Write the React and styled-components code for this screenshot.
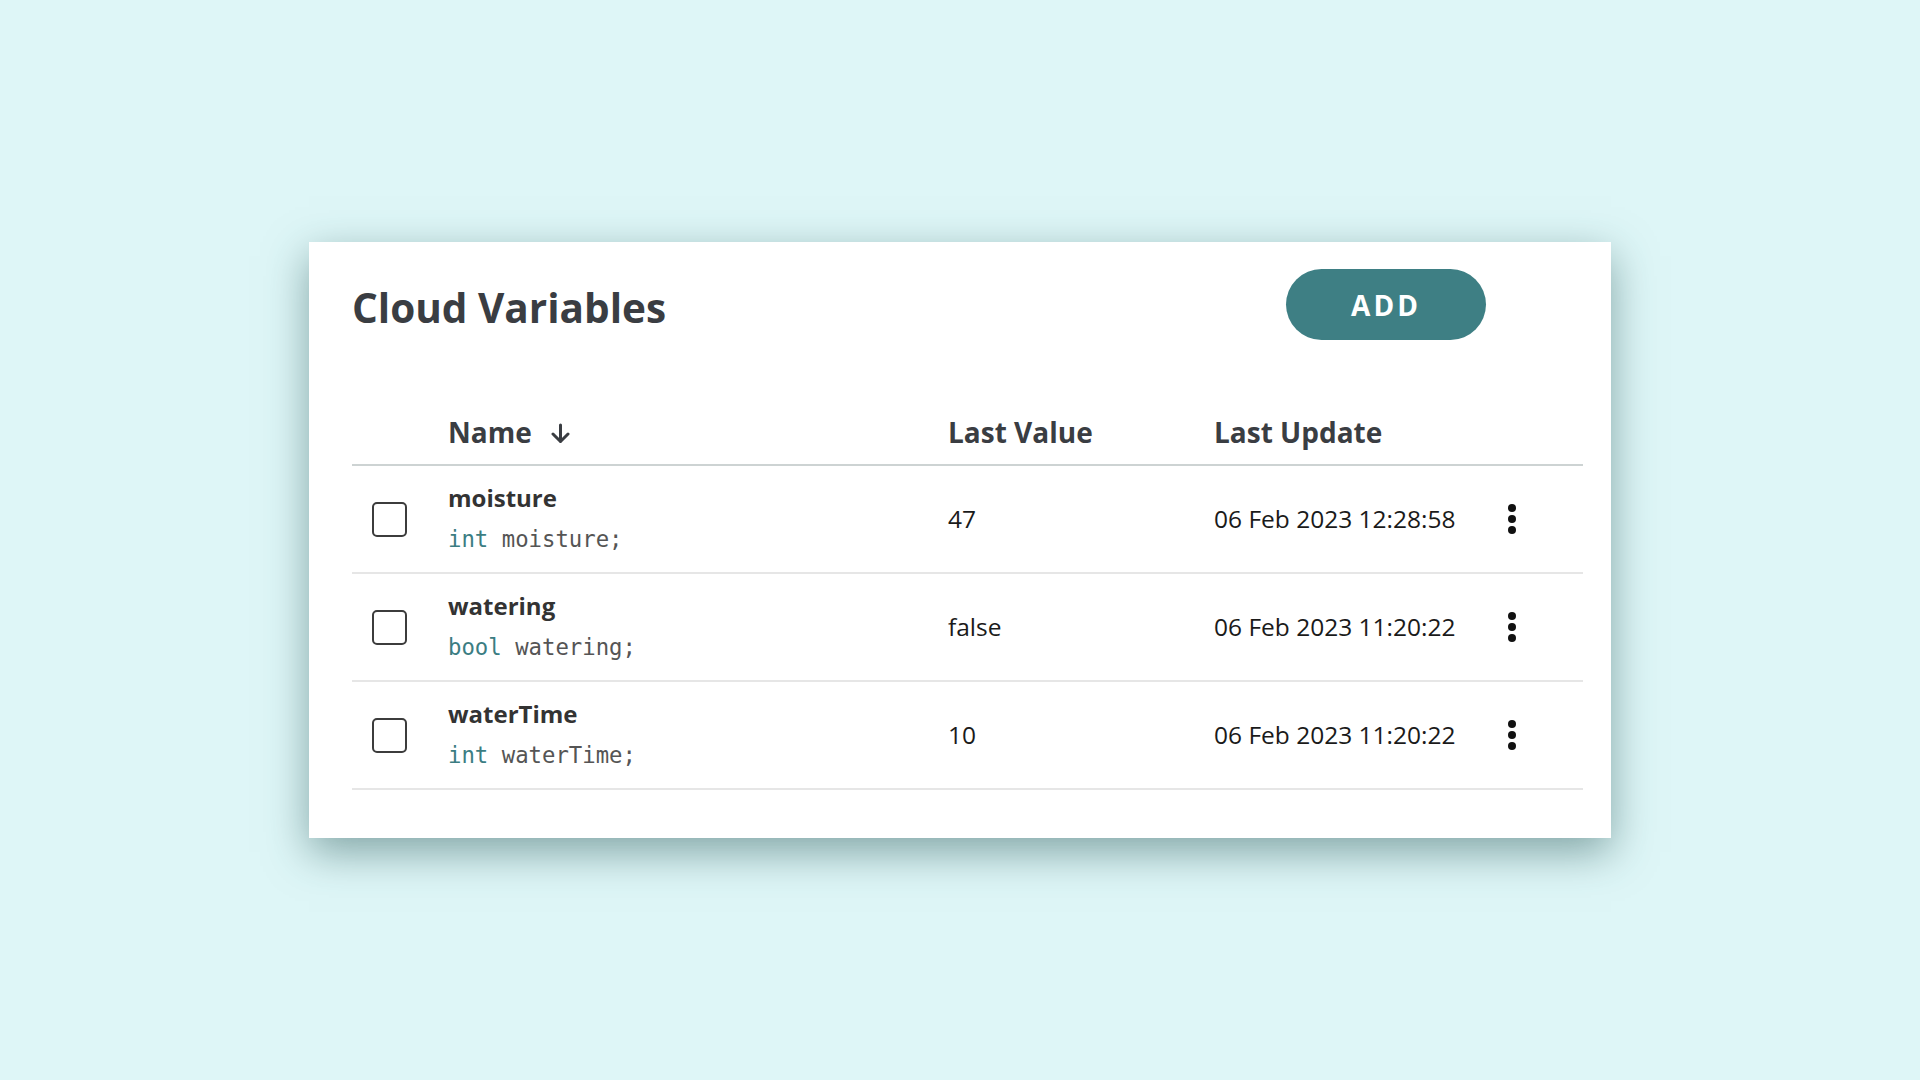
import React from 'react'
import styled, { createGlobalStyle } from 'styled-components'

const GlobalStyle = createGlobalStyle`
  html, body {
    margin: 0;
    padding: 0;
    background: #def6f7;
  }
  body {
    font-family: "Open Sans", "Liberation Sans", sans-serif;
  }
`

const variables = [
  { name: 'moisture', type: 'int', decl: 'moisture;', value: '47', updated: '06 Feb 2023 12:28:58' },
  { name: 'watering', type: 'bool', decl: 'watering;', value: 'false', updated: '06 Feb 2023 11:20:22' },
  { name: 'waterTime', type: 'int', decl: 'waterTime;', value: '10', updated: '06 Feb 2023 11:20:22' },
]

const Page = styled.div`
  min-height: 100vh;
  display: flex;
  align-items: center;
  justify-content: center;
`

const Card = styled.section`
  width: 1302px;
  box-sizing: border-box;
  background: #fff;
  padding: 27px 28px 48px 43px;
  box-shadow: 0 14px 40px rgba(40, 85, 85, 0.5);
`

const TitleRow = styled.div`
  display: flex;
  align-items: center;
  justify-content: space-between;
  height: 71px;
`

const Title = styled.h1`
  margin: 0;
  padding-top: 6px;
  font-size: 40.5px;
  line-height: 54px;
  font-weight: 700;
  color: #3a3d42;
`

const AddButton = styled.button`
  width: 200px;
  height: 71px;
  margin-right: 97px;
  border: none;
  border-radius: 36px;
  background: #3e7f84;
  color: #fff;
  font-family: "Open Sans", sans-serif;
  font-size: 28px;
  font-weight: 700;
  letter-spacing: 3px;
  cursor: pointer;
`

const Table = styled.div`
  margin-top: 74px;
`

const Grid = styled.div`
  display: grid;
  grid-template-columns: 96px 500px 266px 270px 56px 1fr;
  align-items: center;
`

const HeaderRow = styled(Grid)`
  padding-bottom: 13px;
  border-bottom: 2px solid #cdd3d3;
`

const HeadCell = styled.div`
  display: flex;
  align-items: center;
  gap: 18px;
  font-size: 28px;
  line-height: 37px;
  font-weight: 700;
  color: #3a3d42;
`

const Row = styled(Grid)`
  height: 106px;
  border-bottom: 2px solid #e6e6e6;
`

const CheckCell = styled.div`
  padding-left: 20px;
  display: flex;
`

const Checkbox = styled.span`
  width: 35px;
  height: 35px;
  box-sizing: border-box;
  border: 2px solid #3c3c3c;
  border-radius: 5px;
`

const NameCell = styled.div`
  display: flex;
  flex-direction: column;
  gap: 11px;
  padding-bottom: 4px;
`

const VarName = styled.span`
  font-size: 24px;
  line-height: 32px;
  font-weight: 700;
  color: #333;
`

const Decl = styled.code`
  font-family: "DejaVu Sans Mono", "Liberation Mono", monospace;
  font-size: 22.3px;
  line-height: 28px;
  color: #555;
`

const TypeWord = styled.span`
  color: #3b7d82;
`

const Value = styled.span`
  font-size: 24.5px;
  line-height: 32px;
  color: #1a1a1a;
`

const Kebab = styled.div`
  display: flex;
  flex-direction: column;
  align-items: center;
  gap: 3px;
`

const Dot = styled.span`
  width: 8px;
  height: 8px;
  border-radius: 50%;
  background: #111;
`

const SortArrow = () => (
  <svg width="21" height="20" viewBox="0 0 21 20" fill="none" stroke="#3a3d42" strokeWidth="3" strokeLinecap="round" strokeLinejoin="round">
    <path d="M10.5 2v16" />
    <path d="M3 11l7.5 7.5L18 11" />
  </svg>
)

export default function App() {
  return (
    <Page>
      <GlobalStyle />
      <Card>
        <TitleRow>
          <Title>Cloud Variables</Title>
          <AddButton>ADD</AddButton>
        </TitleRow>
        <Table>
          <HeaderRow>
            <div />
            <HeadCell>
              Name <SortArrow />
            </HeadCell>
            <HeadCell>Last Value</HeadCell>
            <HeadCell>Last Update</HeadCell>
            <div />
            <div />
          </HeaderRow>
          {variables.map(v => (
            <Row key={v.name}>
              <CheckCell>
                <Checkbox />
              </CheckCell>
              <NameCell>
                <VarName>{v.name}</VarName>
                <Decl>
                  <TypeWord>{v.type}</TypeWord> {v.decl}
                </Decl>
              </NameCell>
              <Value>{v.value}</Value>
              <Value>{v.updated}</Value>
              <Kebab>
                <Dot />
                <Dot />
                <Dot />
              </Kebab>
              <div />
            </Row>
          ))}
        </Table>
      </Card>
    </Page>
  )
}
